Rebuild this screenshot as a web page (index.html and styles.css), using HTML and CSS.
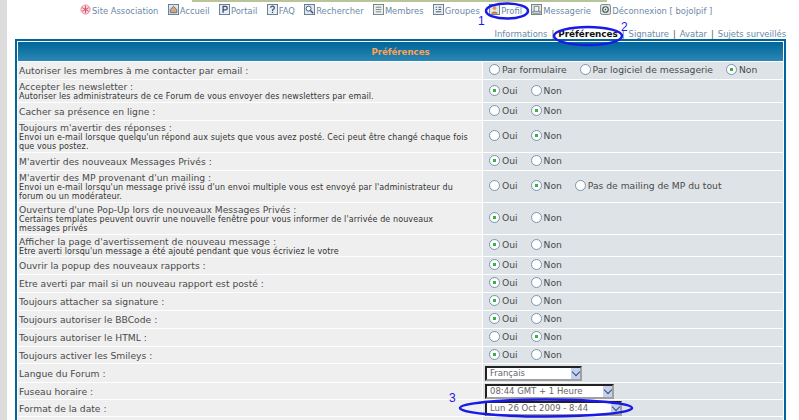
FILE: index.html
```html
<!DOCTYPE html>
<html lang="fr">
<head>
    <meta charset="UTF-8">
    <title>Préférences</title>
    <link rel="stylesheet" href="styles.css">
</head>
<body>
    <div class="side-strip"></div>
    <div class="page">
        <div class="top-strip"></div>
        <nav class="main-nav">
            <a><svg class="icon" viewBox="0 0 12 12"><circle cx="6" cy="6" r="5" fill="#f7d5dc" stroke="#e58a9c"/><path d="M6 2v8M2.5 4l7 4M9.5 4l-7 4" stroke="#d8455f"/></svg>Site Association</a>
            <a><svg class="icon" viewBox="0 0 12 12"><rect x=".5" y=".5" width="11" height="11" fill="#dfe6ee" stroke="#5f7891"/><path d="M2.5 6L6 2.5 9.5 6v3.5h-7z" fill="#d9a679" stroke="#58708a"/></svg>Accueil</a>
            <a><svg class="icon" viewBox="0 0 12 12"><rect x=".5" y=".5" width="11" height="11" fill="#e8edf3" stroke="#5f7891"/><path d="M4.5 9.5v-7H7a2 2 0 0 1 0 4H4.5" fill="none" stroke="#34506e" stroke-width="1.4"/></svg>Portail</a>
            <a><svg class="icon" viewBox="0 0 12 12"><rect x=".5" y=".5" width="11" height="11" fill="#e8edf3" stroke="#5f7891"/><path d="M4 4.2a2 1.8 0 1 1 2.6 1.7C6 6.3 6 6.6 6 7.5M6 8.5v1.2" fill="none" stroke="#34506e" stroke-width="1.3"/></svg>FAQ</a>
            <a><svg class="icon" viewBox="0 0 12 12"><rect x=".5" y=".5" width="11" height="11" fill="#dfe6ee" stroke="#5f7891"/><circle cx="5" cy="5" r="2.7" fill="#fff" stroke="#34506e"/><path d="M7 7l3 3" stroke="#34506e" stroke-width="1.5"/></svg>Rechercher</a>
            <a><svg class="icon" viewBox="0 0 12 12"><rect x=".5" y=".5" width="11" height="11" fill="#eef0f0" stroke="#6f7f80"/><path d="M3 3.5h6M3 6h6M3 8.5h6" stroke="#6f7f80"/></svg>Membres</a>
            <a><svg class="icon" viewBox="0 0 12 12"><rect x=".5" y=".5" width="11" height="11" fill="#eef0f0" stroke="#5f7891"/><path d="M3 3.5h1.5M6 3.5h3M3 6h1.5M6 6h3M3 8.5h6" stroke="#34506e"/></svg>Groupes</a>
            <a><svg class="icon" viewBox="0 0 12 12"><rect x=".5" y=".5" width="11" height="11" fill="#dfe6ee" stroke="#5f7891"/><circle cx="6" cy="4.5" r="2" fill="#e59a5c"/><path d="M2.5 10.5c0-3 7-3 7 0z" fill="#c9743e"/></svg>Profil</a>
            <a><svg class="icon" viewBox="0 0 12 12"><rect x=".5" y=".5" width="11" height="11" fill="#e4e6e6" stroke="#6f7f80"/><path d="M3.5 8V2.5h5V8M2 8h8v2H2z" fill="#f4f4f4" stroke="#6f7f80"/></svg>Messagerie</a>
            <a><svg class="icon" viewBox="0 0 12 12"><rect x=".5" y=".5" width="11" height="11" rx="2" fill="#dfe3e3" stroke="#6f7f80"/><circle cx="6" cy="6" r="3" fill="#fff" stroke="#3f5a50" stroke-width="1.3"/><circle cx="6" cy="6" r="1" fill="#3f5a50"/></svg>Déconnexion [ bojolpif ]</a>
        </nav>
        <div class="sub-nav">
            <a>Informations</a><span class="sep">|</span><a class="current">Préférences</a><span class="sep">|</span><a>Signature</a><span class="sep">|</span><a>Avatar</a><span class="sep">|</span><a>Sujets surveillés</a>
        </div>
        <table class="forumline">
            <colgroup>
                <col class="col-label">
                <col>
            </colgroup>
            <tr>
                <th colspan="2">Préférences</th>
            </tr>
            <tr class="h17">
                <td class="row1">Autoriser les membres à me contacter par email :</td>
                <td class="row2 wide">
                    <label><input type="radio" name="r1">Par formulaire</label>
                    <label><input type="radio" name="r1">Par logiciel de messagerie</label>
                    <label><input type="radio" name="r1" checked>Non</label>
                </td>
            </tr>
            <tr class="h22">
                <td class="row1">Accepter les newsletter :<small>Autoriser les administrateurs de ce Forum de vous envoyer des newsletters par email.</small></td>
                <td class="row2">
                    <label><input type="radio" name="r2" checked>Oui</label>
                    <label><input type="radio" name="r2">Non</label>
                </td>
            </tr>
            <tr class="h17">
                <td class="row1">Cacher sa présence en ligne :</td>
                <td class="row2">
                    <label><input type="radio" name="r3">Oui</label>
                    <label><input type="radio" name="r3" checked>Non</label>
                </td>
            </tr>
            <tr class="h31">
                <td class="row1">Toujours m'avertir des réponses :<small>Envoi un e-mail lorsque quelqu'un répond aux sujets que vous avez posté. Ceci peut être changé chaque fois que vous postez.</small></td>
                <td class="row2">
                    <label><input type="radio" name="r4">Oui</label>
                    <label><input type="radio" name="r4" checked>Non</label>
                </td>
            </tr>
            <tr class="h17">
                <td class="row1">M'avertir des nouveaux Messages Privés :</td>
                <td class="row2">
                    <label><input type="radio" name="r5" checked>Oui</label>
                    <label><input type="radio" name="r5">Non</label>
                </td>
            </tr>
            <tr class="h31">
                <td class="row1">M'avertir des MP provenant d'un mailing :<small>Envoi un e-mail lorsqu'un message privé issu d'un envoi multiple vous est envoyé par l'administrateur du forum ou un modérateur.</small></td>
                <td class="row2">
                    <label><input type="radio" name="r6">Oui</label>
                    <label><input type="radio" name="r6" checked>Non</label>
                    <label><input type="radio" name="r6">Pas de mailing de MP du tout</label>
                </td>
            </tr>
            <tr class="h31">
                <td class="row1">Ouverture d'une Pop-Up lors de nouveaux Messages Privés :<small>Certains templates peuvent ouvrir une nouvelle fenêtre pour vous informer de l'arrivée de nouveaux messages privés</small></td>
                <td class="row2">
                    <label><input type="radio" name="r7" checked>Oui</label>
                    <label><input type="radio" name="r7">Non</label>
                </td>
            </tr>
            <tr class="h21">
                <td class="row1">Afficher la page d'avertissement de nouveau message :<small>Etre averti lorsqu'un message a été ajouté pendant que vous écriviez le votre</small></td>
                <td class="row2">
                    <label><input type="radio" name="r8" checked>Oui</label>
                    <label><input type="radio" name="r8">Non</label>
                </td>
            </tr>
            <tr class="h17">
                <td class="row1">Ouvrir la popup des nouveaux rapports :</td>
                <td class="row2">
                    <label><input type="radio" name="r9" checked>Oui</label>
                    <label><input type="radio" name="r9">Non</label>
                </td>
            </tr>
            <tr class="h17">
                <td class="row1">Etre averti par mail si un nouveau rapport est posté :</td>
                <td class="row2">
                    <label><input type="radio" name="r10" checked>Oui</label>
                    <label><input type="radio" name="r10">Non</label>
                </td>
            </tr>
            <tr class="h17">
                <td class="row1">Toujours attacher sa signature :</td>
                <td class="row2">
                    <label><input type="radio" name="r11" checked>Oui</label>
                    <label><input type="radio" name="r11">Non</label>
                </td>
            </tr>
            <tr class="h17">
                <td class="row1">Toujours autoriser le BBCode :</td>
                <td class="row2">
                    <label><input type="radio" name="r12" checked>Oui</label>
                    <label><input type="radio" name="r12">Non</label>
                </td>
            </tr>
            <tr class="h17">
                <td class="row1">Toujours autoriser le HTML :</td>
                <td class="row2">
                    <label><input type="radio" name="r13">Oui</label>
                    <label><input type="radio" name="r13" checked>Non</label>
                </td>
            </tr>
            <tr class="h16">
                <td class="row1">Toujours activer les Smileys :</td>
                <td class="row2">
                    <label><input type="radio" name="r14" checked>Oui</label>
                    <label><input type="radio" name="r14">Non</label>
                </td>
            </tr>
            <tr class="h18">
                <td class="row1">Langue du Forum :</td>
                <td class="row2"><span class="dropdown lang"><select><option>Français</option></select></span></td>
            </tr>
            <tr class="h16">
                <td class="row1">Fuseau horaire :</td>
                <td class="row2"><span class="dropdown zone"><select><option>08:44 GMT + 1 Heure</option></select></span></td>
            </tr>
            <tr class="h16">
                <td class="row1">Format de la date :</td>
                <td class="row2"><span class="dropdown date"><select><option>Lun 26 Oct 2009 - 8:44</option></select></span></td>
            </tr>
            <tr class="h17">
                <td class="row1"></td>
                <td class="row2"></td>
            </tr>
        </table>
    </div>

    <!-- annotations drawn over the screenshot -->
    <svg class="marks" viewBox="0 0 799 420">
        <g fill="none" stroke="#1a1ae6" stroke-width="2.5">
            <ellipse cx="507" cy="11" rx="21" ry="7.5"/>
            <ellipse cx="588" cy="36" rx="34" ry="9"/>
            <ellipse cx="546" cy="408" rx="86" ry="8.5"/>
        </g>
        <g fill="#1a1ae6" font-family="'Liberation Sans', sans-serif" font-size="12">
            <text x="478" y="25">1</text>
            <text x="621" y="31">2</text>
            <text x="449" y="402">3</text>
        </g>
    </svg>
</body>
</html>
```

FILE: styles.css
```css
* {
    box-sizing: border-box;
}

html, body {
    height: 420px;
    overflow: hidden;
}

body {
    margin: 0;
    display: flex;
    background: #fff;
    color: #4a4a4a;
    font-family: 'DejaVu Sans', Verdana, sans-serif;
    font-size: 9.2px;
}

.side-strip {
    width: 7px;
    flex: none;
    background: #dcdcdc;
}

.page {
    width: 771px;
    margin-left: 8px;
    flex: none;
}

.top-strip {
    width: 415px;
    height: 2px;
    margin-left: 177px;
    background: #b9c49a;
}

/* nav */
.main-nav {
    display: flex;
    height: 27px;
    padding: 2px 0 0 65px;
    gap: 9.3px;
    color: #6b89a6;
    font-size: 8.4px;
}

.main-nav a {
    display: flex;
    height: 13px;
    align-items: center;
    white-space: nowrap;
}

.icon {
    width: 11px;
    height: 11px;
    margin: -2px 1px 0 0;
    flex: none;
}

.sub-nav {
    display: flex;
    justify-content: flex-end;
    height: 10px;
    line-height: 11px;
    color: #6b89a6;
    font-size: 8.4px;
}

.sub-nav .sep {
    margin: 0 4px;
    color: #555;
}

.sub-nav .current {
    color: #111;
    font-size: 8.8px;
    font-weight: bold;
}

/* table */
.forumline {
    width: 771px;
    table-layout: fixed;
    border: 2px solid #006699;
    border-spacing: 1px;
    background: #fff;
}

.col-label {
    width: 464px;
}

.forumline th {
    height: 19px;
    padding: 0;
    background: linear-gradient(#006699, #2b87b5);
    color: #ffa34f;
    font-size: 8.6px;
    font-weight: bold;
}

.forumline td {
    padding: 0 0 0 1px;
    overflow: hidden;
}

.h16 td { height: 16px; }
.h17 td { height: 17px; }
.h18 td { height: 18px; }
.h21 td { height: 21px; }
.h22 td { height: 22px; }
.h31 td { height: 31px; }

.row1 {
    background: #efefef;
    line-height: 11px;
    vertical-align: middle;
}

.row1 small {
    display: block;
    padding-right: 9px;
    color: #333;
    font-size: 8px;
    line-height: 9px;
    letter-spacing: 0.1px;
}

.row2 {
    background: #dee3e7;
    white-space: nowrap;
    line-height: 11px;
}

.row2 label {
    display: inline-flex;
    align-items: center;
    margin: 0 5px;
    gap: 2px;
}

input[type="radio"] {
    appearance: none;
    width: 11px;
    height: 11px;
    margin: 0;
    border: 1px solid #7d94b0;
    border-radius: 50%;
    background: #fff;
}

input[type="radio"]:checked {
    background: radial-gradient(circle, #3bb045 0, #3bb045 1.5px, #fff 2px);
}

.dropdown {
    position: relative;
    display: block;
    height: 15px;
    margin-left: 1px;
}

.dropdown::after {
    content: "";
    position: absolute;
    top: 2px;
    width: 9px;
    height: 11px;
    background: #c3d0ee;
}

/* chevron inside the arrow box */
.dropdown::before {
    content: "";
    position: absolute;
    z-index: 1;
    top: 3px;
    width: 5px;
    height: 5px;
    border-right: 1.5px solid #34506e;
    border-bottom: 1.5px solid #34506e;
    transform: rotate(45deg);
}

.dropdown select {
    appearance: none;
    display: block;
    height: 15px;
    padding: 0 0 0 3px;
    border: 2px solid;
    border-color: #222 #a0a0a0 #a0a0a0 #222;
    border-radius: 0;
    background: #fff;
    color: #666;
    font-family: 'DejaVu Sans', Verdana, sans-serif;
    font-size: 8.5px;
}

.lang select { width: 97px; }
.lang::after { left: 86px; }
.lang::before { left: 88px; }
.zone select { width: 129px; }
.zone::after { left: 118px; }
.zone::before { left: 120px; }
.date select { width: 137px; }
.date::after { left: 126px; }
.date::before { left: 128px; }

.marks {
    position: absolute;
    top: 0;
    left: 0;
    width: 799px;
    height: 420px;
    pointer-events: none;
}
```
